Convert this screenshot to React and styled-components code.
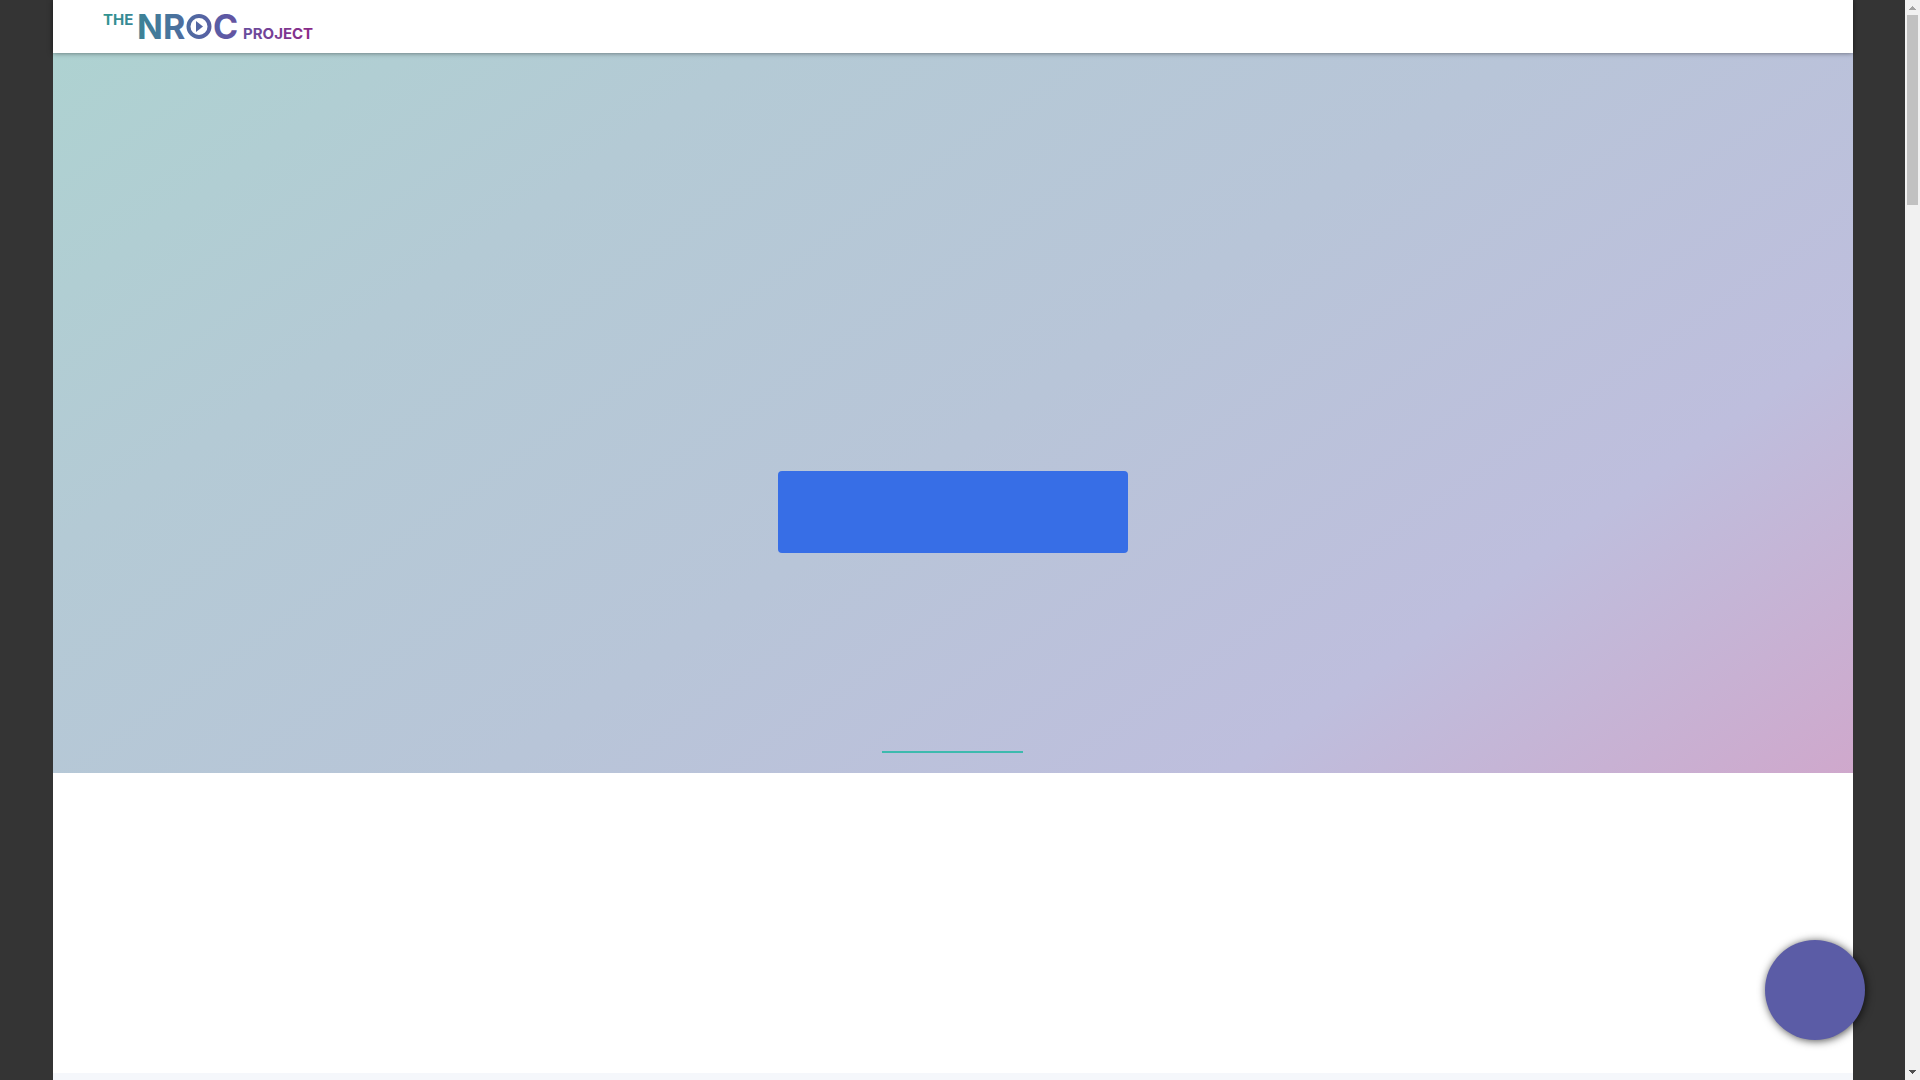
import React from 'react';
import styled, { createGlobalStyle } from 'styled-components';

const GlobalStyle = createGlobalStyle`
  * {
    box-sizing: border-box;
  }

  body {
    margin: 0;
    background-color: #343434;
    font-family: Inter, 'Liberation Sans', sans-serif;
    overflow: hidden;
  }
`;

const Window = styled.div`
  display: flex;
  height: 100vh;
`;

const Viewport = styled.div`
  flex: 1;
  min-width: 0;
  overflow: hidden;
`;

const Page = styled.div`
  max-width: 1800px;
  margin: 0 auto;
  background-color: #fff;
`;

const Header = styled.header`
  position: relative;
  display: flex;
  align-items: center;
  height: 53px;
  padding: 0 50px;
  background-color: #fff;
  box-shadow: 0 0 5px rgba(0, 0, 0, 0.5);
`;

const LogoLink = styled.a`
  display: block;

  svg {
    display: block;
  }

  text {
    font-family: Inter, sans-serif;
    font-weight: 700;
  }
`;

const Hero = styled.section`
  display: flex;
  flex-direction: column;
  align-items: center;
  justify-content: flex-end;
  height: 720px;
  padding-bottom: 20px;
  background: linear-gradient(145deg, #aed2d1 0%, #b4cad5 25%, #b8c5d8 52%, #bebedd 78%, #cfa8cc 100%);
`;

const HeroButton = styled.button`
  width: 350px;
  height: 82px;
  margin-bottom: 198px;
  border: 0;
  border-radius: 4px;
  background-color: #376ee6;
`;

const Divider = styled.hr`
  width: 141px;
  height: 2px;
  margin: 0;
  border: 0;
  background-color: #3dbaae;
`;

const Intro = styled.section`
  height: 300px;
  background-color: #fff;
`;

const NextSection = styled.section`
  height: 400px;
  background-color: #f5f7fb;
`;

// Floating button, sits over the page content
const ChatButton = styled.button`
  position: fixed;
  right: 55px;
  bottom: 40px;
  width: 100px;
  height: 100px;
  border: 0;
  border-radius: 50%;
  background-color: #5b5ca6;
  box-shadow: 1px 1px 8px rgba(0, 0, 0, 0.7);
`;

const ScrollTrack = styled.div`
  display: flex;
  flex-direction: column;
  align-items: center;
  justify-content: space-between;
  width: 15px;
  background-color: #f1f1f1;
`;

const ScrollThumb = styled.div`
  width: 11px;
  height: 190px;
  margin-bottom: auto;
  background-color: #c1c1c1;
`;

const ScrollArrow = styled.svg`
  display: block;
  width: 15px;
  height: 15px;
  fill: ${props => props.$color};
`;

function Logo() {
  return (
    <svg width="220" height="53" viewBox="0 0 220 53" role="img" aria-label="The NROC Project">
      <defs>
        <linearGradient id="logoFill" gradientUnits="userSpaceOnUse" x1="0" y1="0" x2="212" y2="0">
          <stop offset="0" stopColor="#2f9490" />
          <stop offset="0.55" stopColor="#5b5ca6" />
          <stop offset="1" stopColor="#8c2686" />
        </linearGradient>
      </defs>
      <g fill="url(#logoFill)">
        <text x="0" y="25" fontSize="15">THE</text>
        <text x="34" y="39" fontSize="34">NR</text>
        <text x="110" y="39" fontSize="34">C</text>
        <text x="140" y="39" fontSize="15">PROJECT</text>
        <path d="M93 21 L100 26.5 L93 32 Z" />
      </g>
      <circle cx="96" cy="26.5" r="10.5" fill="none" stroke="url(#logoFill)" strokeWidth="4" />
    </svg>
  );
}

function App() {
  return (
    <>
      <GlobalStyle />
      <Window>
        <Viewport>
          <Page>
            <Header>
              <LogoLink href="#home">
                <Logo />
              </LogoLink>
            </Header>
            <Hero>
              <HeroButton type="button" aria-label="Get started" />
              <Divider />
            </Hero>
            <Intro />
            <NextSection />
          </Page>
        </Viewport>
        <ScrollTrack>
          <ScrollArrow viewBox="0 0 15 15" $color="#a3a3a3">
            <path d="M7 6h1v1h1v1h1v1h1v1H4V9h1V8h1V7h1z" />
          </ScrollArrow>
          <ScrollThumb />
          <ScrollArrow viewBox="0 0 15 15" $color="#505050">
            <path d="M4 5h7v1h-1v1H9v1H8v1H7V8H6V7H5V6H4z" />
          </ScrollArrow>
        </ScrollTrack>
      </Window>
      <ChatButton type="button" aria-label="Chat" />
    </>
  );
}

export default App;
